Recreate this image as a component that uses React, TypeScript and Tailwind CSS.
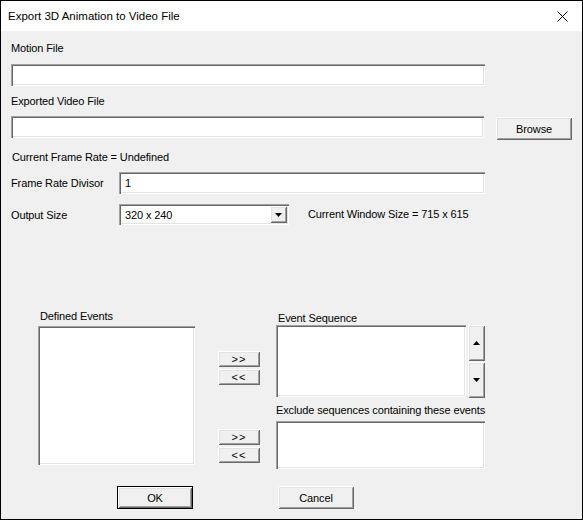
import React from "react";

const sunken =
  "bg-white shadow-[inset_1px_1px_0_#a0a0a0,inset_2px_2px_0_#696969,inset_-1px_-1px_0_#ffffff,inset_-2px_-2px_0_#e3e3e3]";
const raised =
  "bg-[#f0f0f0] shadow-[inset_1px_1px_0_#ffffff,inset_-1px_-1px_0_#696969,inset_2px_2px_0_#e3e3e3,inset_-2px_-2px_0_#a0a0a0]";

function Tri({ up = false }: { up?: boolean }) {
  return (
    <svg width="7" height="4" viewBox="0 0 7 4">
      {up ? <path d="M0 4h7L3.5 0z" fill="#000" /> : <path d="M0 0h7L3.5 4z" fill="#000" />}
    </svg>
  );
}

function Btn({ label, className }: { label: string; className: string }) {
  return (
    <div className={`${raised} flex items-center justify-center ${className}`}>
      <span>{label}</span>
    </div>
  );
}

export default function App() {
  return (
    <div
      className="w-[583px] h-[520px] border border-black flex flex-col text-[11px] leading-[14px] tracking-[-0.12px] text-black"
      style={{ fontFamily: '"Liberation Sans", Arial, sans-serif' }}
    >
      {/* title bar */}
      <div className="h-[30px] bg-white flex items-center pl-[7px] pr-[14px] shrink-0">
        <span className="text-[11.5px] tracking-normal flex-1">Export 3D Animation to Video File</span>
        <svg width="11" height="11" viewBox="0 0 11 11">
          <path d="M0.5 0.5l10 10M10.5 0.5l-10 10" stroke="#000" strokeWidth="1" />
        </svg>
      </div>

      <div className="flex-1 bg-[#f0f0f0] px-[10px] flex flex-col">
        <div className="mt-[10px] h-[14px]">Motion File</div>
        <div className={`${sunken} mt-[9px] h-[22px] w-[474px]`} />

        <div className="mt-[8px] h-[14px]">Exported Video File</div>
        <div className="mt-[8px] flex items-start">
          <div className={`${sunken} h-[22px] w-[474px]`} />
          <Btn label="Browse" className="ml-[12px] mt-[1px] w-[76px] h-[23px]" />
        </div>

        <div className="mt-[10px] h-[14px] pl-[1px]">Current Frame Rate = Undefined</div>

        <div className="mt-[8px] flex items-center h-[22px]">
          <div className="w-[108px]">Frame Rate Divisor</div>
          <div className={`${sunken} h-[22px] w-[366px] flex items-center pl-[6px]`}>1</div>
        </div>

        <div className="mt-[10px] flex items-center h-[21px]">
          <div className="w-[108px]">Output Size</div>
          <div className={`${sunken} h-[21px] w-[170px] flex items-center pl-[6px] pr-[2px]`}>
            <span className="flex-1">320 x 240</span>
            <div className={`${raised} w-[17px] h-[17px] flex items-center justify-center`}>
              <Tri />
            </div>
          </div>
          <div className="ml-[19px] -mt-[2px]">Current Window Size = 715 x 615</div>
        </div>

        {/* event lists */}
        <div className="mt-[84px] flex items-start">
          <div className="ml-[27px] flex flex-col">
            <div className="h-[14px] pl-[2px]">Defined Events</div>
            <div className={`${sunken} mt-[3px] w-[157px] h-[139px]`} />
          </div>

          <div className="ml-[23px] w-[42px] flex flex-col">
            <Btn label=">>" className="mt-[42px] h-[16px] tracking-[1px]" />
            <Btn label="<<" className="mt-[2px] h-[16px] tracking-[1px]" />
            <Btn label=">>" className="mt-[44px] h-[16px] tracking-[1px]" />
            <Btn label="<<" className="mt-[2px] h-[16px] tracking-[1px]" />
          </div>

          <div className="ml-[16px] flex flex-col">
            <div className="mt-[3px] h-[13px] leading-[13px] pl-[2px]">Event Sequence</div>
            <div className="flex items-start">
              <div className={`${sunken} w-[190px] h-[72px]`} />
              <div className="ml-[2px] flex flex-col">
                <div className={`${raised} w-[17px] h-[36px] flex items-center justify-center`}>
                  <Tri up />
                </div>
                <div className={`${raised} mt-[1px] w-[17px] h-[36px] flex items-center justify-center`}>
                  <Tri />
                </div>
              </div>
            </div>
            <div className="mt-[5px] h-[14px]">Exclude sequences containing these events</div>
            <div className={`${sunken} mt-[4px] w-[209px] h-[48px]`} />
          </div>
        </div>

        <div className="mt-[17px] flex">
          <div className="ml-[106px] border border-black">
            <Btn label="OK" className="w-[74px] h-[21px]" />
          </div>
          <Btn label="Cancel" className="ml-[85px] w-[76px] h-[23px]" />
        </div>
      </div>
    </div>
  );
}
